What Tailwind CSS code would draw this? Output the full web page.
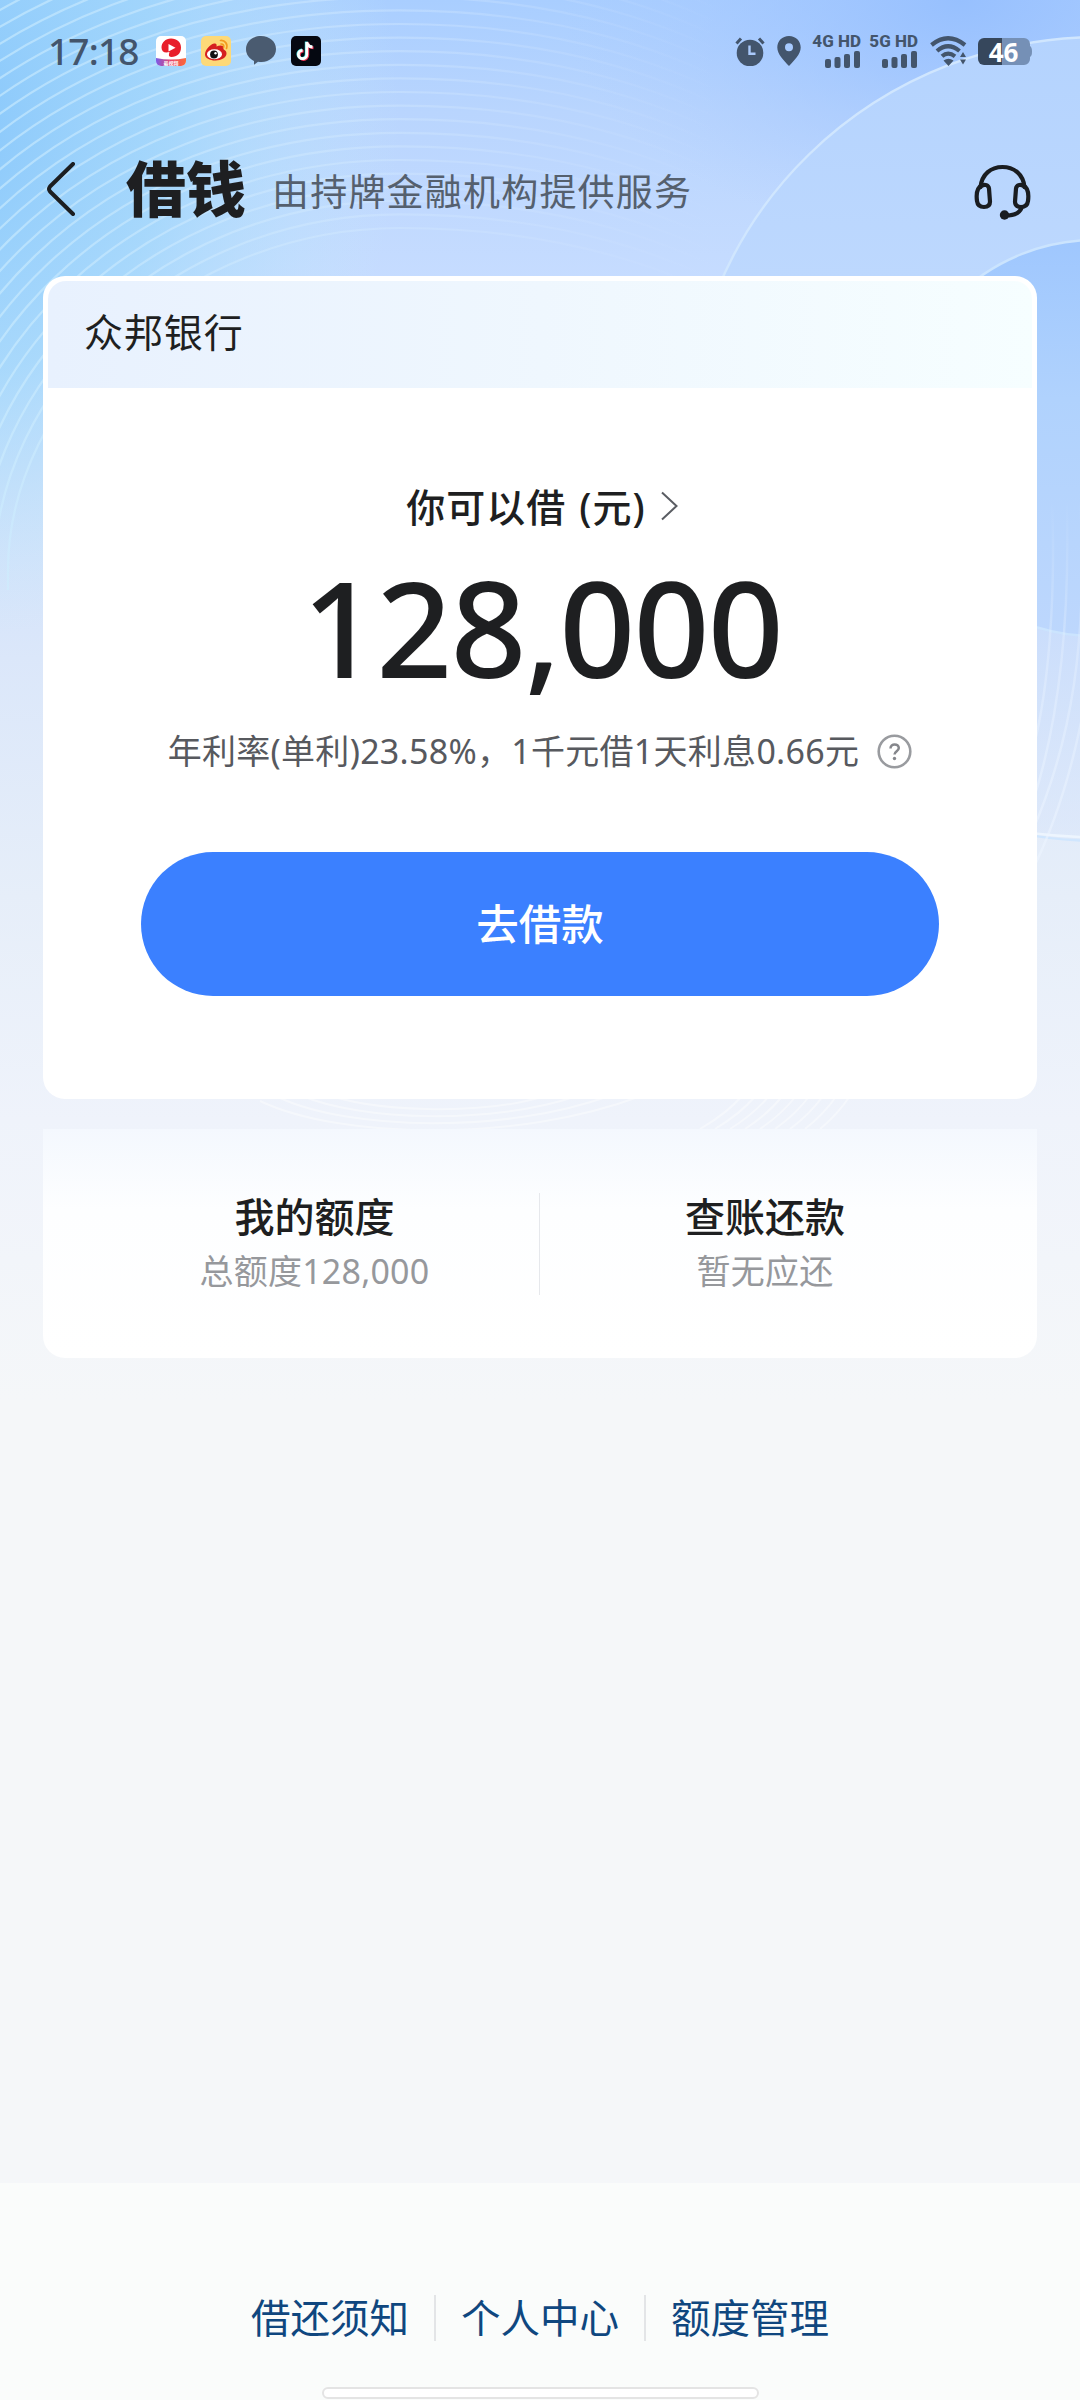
<!DOCTYPE html>
<html lang="zh-CN">
<head>
<meta charset="utf-8">
<meta name="viewport" content="width=device-width">
<title>借钱</title>
<script src="https://cdn.jsdelivr.net/npm/@tailwindcss/browser@4"></script>
</head>
<body class="bg-[#f5f7f9] font-['Noto_Sans','Noto_Sans_CJK_SC',sans-serif] text-[#1e1f21]">
<div class="relative flex h-[2400px] w-[1080px] flex-col overflow-hidden whitespace-nowrap">

  <!-- backdrop -->
  <svg class="absolute top-0 left-0" width="1080" height="1400" viewBox="0 0 1080 1400" fill="none">
    <defs>
      <linearGradient id="base" x1="0" y1="0" x2="0" y2="1">
        <stop offset="0" stop-color="#a9ceff"/><stop offset=".08" stop-color="#b9d5fe"/><stop offset=".2" stop-color="#c6dcff"/>
        <stop offset=".33" stop-color="#cddffb"/><stop offset=".47" stop-color="#dbe7fa"/><stop offset=".64" stop-color="#e6eef9"/><stop offset=".8" stop-color="#eff3fb"/><stop offset="1" stop-color="#f5f7f9"/>
      </linearGradient>
      <radialGradient id="cyan" gradientUnits="userSpaceOnUse" cx="0" cy="0" r="1" gradientTransform="matrix(460 0 0 520 -60 120)">
        <stop offset="0" stop-color="#86c6fb"/><stop offset=".5" stop-color="#9ed7fb" stop-opacity=".75"/><stop offset="1" stop-color="#c6ecfb" stop-opacity="0"/>
      </radialGradient>
      <radialGradient id="blue" gradientUnits="userSpaceOnUse" cx="0" cy="0" r="1" gradientTransform="matrix(400 0 0 240 960 0)">
        <stop offset="0" stop-color="#97c0fe"/><stop offset="1" stop-color="#a9c9ff" stop-opacity="0"/>
      </radialGradient>
      <linearGradient id="disc" x1="0" y1="0" x2="0" y2="1">
        <stop offset="0" stop-color="#b4d3fe"/><stop offset=".3" stop-color="#bdd8fe"/><stop offset=".6" stop-color="#bfd7fd"/><stop offset="1" stop-color="#dbe7fa" stop-opacity=".6"/>
      </linearGradient>
      <linearGradient id="core" x1="0" y1="0" x2="0" y2="1">
        <stop offset="0" stop-color="#9fc7fe"/><stop offset=".4" stop-color="#b0d2fd"/><stop offset="1" stop-color="#bdd7fd"/>
      </linearGradient>
      <linearGradient id="fade" gradientUnits="userSpaceOnUse" x1="0" y1="0" x2="720" y2="0">
        <stop offset="0" stop-color="#cdedfe" stop-opacity=".6"/><stop offset=".5" stop-color="#d2e9fe" stop-opacity=".45"/><stop offset="1" stop-color="#d6e6ff" stop-opacity="0"/>
      </linearGradient>
      <linearGradient id="side" gradientUnits="userSpaceOnUse" x1="0" y1="500" x2="0" y2="880">
        <stop offset="0" stop-color="#e6f1ff" stop-opacity="0"/><stop offset=".4" stop-color="#e6f1ff" stop-opacity=".4"/><stop offset="1" stop-color="#eef5ff" stop-opacity=".6"/>
      </linearGradient>
    </defs>
    <rect width="1080" height="1400" fill="url(#base)"/>
    <rect width="1080" height="1400" fill="url(#cyan)"/>
    <rect width="1080" height="1400" fill="url(#blue)"/>
    <g id="rings" stroke="url(#fade)" stroke-width="2.2"></g>
    <ellipse cx="1100" cy="439" rx="412" ry="402" fill="url(#disc)" stroke="#d0e6fe" stroke-width="2.4"/>
    <circle cx="1095" cy="438" r="198" fill="url(#core)" stroke="#cbe4fe" stroke-width="2.4"/>
    <path d="M1030 833Q1055 836 1080 837" stroke="#edf5fe" stroke-width="2.4"/>
    <g stroke="url(#side)" stroke-width="2.4">
      <path d="M1052 500C1056 600 1048 690 1034 745"/><path d="M1066 480C1071 600 1062 710 1034 798"/><path d="M1080 500C1088 640 1072 740 1032 832"/><path d="M1094 640Q1078 780 1030 875"/>
    </g>
    <g id="waves" stroke="#fff" stroke-opacity=".4" stroke-width="2"></g>
  </svg>

  <!-- status bar -->
  <div class="relative flex h-[102px] shrink-0 items-center justify-between pr-[48px] pl-[48px] text-[#43556c]">
    <div class="flex items-center">
      <span class="w-[108px] pb-[1px] text-[37px] leading-none font-medium tracking-[-0.8px]">17:18</span>
      <svg width="30" height="30" viewBox="0 0 30 30">
        <clipPath id="r"><rect width="30" height="30" rx="5"/></clipPath>
        <linearGradient id="strip"><stop stop-color="#7a5be8"/><stop offset=".5" stop-color="#e8486c"/><stop offset="1" stop-color="#fb6a3a"/></linearGradient>
        <g clip-path="url(#r)"><rect width="30" height="30" fill="#fff"/><path d="M0 22q15 3 30 0v8H0z" fill="url(#strip)"/></g>
        <path d="M15 2.500c6 0 10 3.500 10 9 0 6-4 9.500-9.500 9.500-2 0-3-1-2.500-3l.5-2c-5 1.500-8-.5-8-4.500 0-5 4-9 9.500-9z" fill="#e81e2a"/>
        <path d="M12.500 8l7 3.700-7 3.800z" fill="#fff"/>
        <text x="15" y="28.500" text-anchor="middle" font-size="5" font-weight="700" fill="#fff">最视频</text>
      </svg>
      <svg class="ml-[15px]" width="30" height="30" viewBox="0 0 30 30">
        <rect width="30" height="30" rx="5" fill="#fdd978"/>
        <path d="M4 18.500C4 14 9 8.500 13 7.500c2.500-.5 3 1 2.500 3 3-1.500 7.500-1.500 7 1.500-.2 1 0 1.500 1 2 1.500.8 2 2 2 3.500 0 4-5 7-11 7-6 0-10.500-2.500-10.500-6z" fill="#d5201f"/>
        <ellipse cx="13.500" cy="18.300" rx="7.500" ry="5" fill="#fff"/><circle cx="13" cy="18.500" r="3.900" fill="#111"/><circle cx="14.500" cy="17.300" r="1.200" fill="#fff"/>
        <path d="M19.500 4.500c4.500-.5 7.500 3.500 6 8M20 8c2-.2 3.200 1.500 2.600 3.200" fill="none" stroke="#f39a1e" stroke-width="1.700" stroke-linecap="round"/>
      </svg>
      <svg class="ml-[15px]" width="30" height="30" viewBox="0 0 30 30" fill="#4a5b70"><path d="M15 0c8.500 0 15 5.500 15 13S23.500 26 15.500 26c-1.500 0-2.500-.2-3.500-.3L8 28.700v-3.800C3 22.500 0 18.500 0 13 0 5.500 6.500 0 15 0z"/></svg>
      <svg class="ml-[15px]" width="30" height="30" viewBox="0 0 30 30" fill="none">
        <rect width="30" height="30" rx="5" fill="#050811"/>
        <g stroke-width="2.800"><path d="M15.800 6v12.500a4.200 4.200 0 1 1-4.200-4.200M15.800 6c.4 3 2.500 4.800 5.700 5" stroke="#f2385a" transform="translate(1 .8)"/><path d="M15.800 6v12.500a4.200 4.200 0 1 1-4.200-4.200M15.800 6c.4 3 2.500 4.800 5.700 5" stroke="#3ee0e4" transform="translate(-.6 -.4)"/><path d="M15.800 6v12.500a4.200 4.200 0 1 1-4.200-4.200M15.800 6c.4 3 2.500 4.800 5.700 5" stroke="#fff"/></g>
      </svg>
    </div>
    <div class="flex items-center">
      <svg width="30" height="30" viewBox="0 0 30 30" fill="none"><circle cx="15" cy="17" r="13.300" fill="#43556c"/><path d="M1.500 7.500L6 2.500M28.500 7.500L24 2.500" stroke="#43556c" stroke-width="3"/><path d="M14.500 9.500v8.300h6" stroke="#a9c9fb" stroke-width="2.400"/></svg>
      <svg class="ml-[12px]" width="24" height="30" viewBox="0 0 24 30"><path fill="#43556c" fill-rule="evenodd" d="M12 0c6.800 0 11.700 5 11.700 11.500C23.700 18.500 17 24.500 12 30 7 24.500.3 18.500.3 11.500.3 5 5.200 0 12 0zm0 7.300a4 4 0 1 0 0 8 4 4 0 0 0 0-8z"/></svg>
      <div class="ml-[12px] flex w-[48px] flex-col items-end gap-[3px]">
        <span class="font-[Roboto] text-[17px] leading-[14px] font-extrabold">4G HD</span>
        <svg width="36" height="17" viewBox="0 0 36 17" fill="#43556c"><rect x="0" y="8" width="6" height="9" rx="2"/><rect x="9.500" y="6" width="6" height="11" rx="2"/><rect x="19" y="3" width="6" height="14" rx="2"/><rect x="29" y="0" width="6" height="17" rx="2"/></svg>
      </div>
      <div class="ml-[9px] flex w-[48px] flex-col items-end gap-[3px]">
        <span class="font-[Roboto] text-[17px] leading-[14px] font-extrabold">5G HD</span>
        <svg width="36" height="17" viewBox="0 0 36 17" fill="#43556c"><rect x="0" y="8" width="6" height="9" rx="2"/><rect x="9.500" y="6" width="6" height="11" rx="2"/><rect x="19" y="3" width="6" height="14" rx="2"/><rect x="29" y="0" width="6" height="17" rx="2"/></svg>
      </div>
      <svg class="ml-[12px]" width="38" height="30" viewBox="0 0 38 30" fill="none" stroke="#43556c" stroke-width="4.200"><path d="M1.500 9Q18 -4.500 35 9M7 15Q18 5.500 29.500 15M12 20.300Q18 15 25 20.300"/><path d="M13.500 24.500q5-3.500 10 0L18.500 30zM30 21l3-5 3 5zM30 23.500l3 5 3-5z" fill="#43556c" stroke="none"/></svg>
      <div class="relative ml-[10px] flex h-[27px] w-[54px] items-center justify-center">
        <svg class="absolute inset-0" width="54" height="27" viewBox="0 0 54 27"><path d="M24 0h22a6 6 0 0 1 6 6v2q2 1 2 5.500T52 19v2a6 6 0 0 1-6 6H24z" fill="#7590b6"/><path d="M6 0h18v27H6a6 6 0 0 1-6-6V6a6 6 0 0 1 6-6z" fill="#36475c"/></svg>
        <span class="relative pt-[1px] pr-[3px] text-[26px] leading-none font-bold text-white">46</span>
      </div>
    </div>
  </div>

  <!-- title bar -->
  <header class="relative flex h-[174px] shrink-0 items-center pr-[48px] pl-[45px]">
    <svg width="32" height="54" viewBox="0 0 32 54" fill="none" stroke="#1c1e21" stroke-width="4" stroke-linecap="round" stroke-linejoin="round"><path d="M28 2L5 24.500q-2 2.500 0 5L28 52"/></svg>
    <h1 class="ml-[49px] w-[120px] pb-[1px] text-[60px] leading-none font-black">借钱</h1>
    <p class="ml-[26px] pt-[4px] text-[37px] leading-none tracking-[1.200px] text-[#55606e]">由持牌金融机构提供服务</p>
    <svg class="mt-[5px] ml-auto" width="59" height="58" viewBox="0 0 58 58" fill="none" stroke="#1a1d21" stroke-width="4.200" stroke-linecap="round"><path d="M7 24C8.500 11 17.500 4 29 4s20.500 7 22 20"/><path d="M8.500 22.500c3-1.500 6.500-.5 7 3l1 13c0 4.500-2.500 5.500-6 5.500-4 0-6.500-2-7-6-.8-6-.8-13 5-15.500zM49.500 22.500c-3-1.500-6.500-.5-7 3l-1 13c0 4.500 2.500 5.500 6 5.500 4 0 6.500-2 7-6 .8-6 .8-13-5-15.500z"/><path d="M48 45c-2 5-8 7.500-16 7.500"/><circle cx="31" cy="52" r="4.700" fill="#1a1d21" stroke="none"/></svg>
  </header>

  <!-- loan card -->
  <section class="relative mx-[43px] flex h-[823px] shrink-0 flex-col items-center rounded-[22px] bg-white p-[5px]">
    <div class="flex h-[107px] w-full shrink-0 items-center rounded-t-[18px] bg-linear-to-r from-[#e8f1fe] via-[#eff7fe] to-[#f6feff] pb-[4px] pl-[36px] text-[39px] tracking-[0.900px]">众邦银行</div>
    <div class="mt-[92px] flex h-[52px] items-center pl-[4px] text-[39px] leading-none font-medium">
      <span class="tracking-[1px]">你可以借<span class="ml-[13px]">(元)</span></span>
      <svg class="ml-[15px]" width="17" height="30" viewBox="0 0 17 30" fill="none" stroke="#5a5d63" stroke-width="2"><path d="M1 1.500L15.500 15 1 28.500"/></svg>
    </div>
    <div class="mt-[30px] flex h-[128px] items-center pl-[4px] text-[133px] leading-none font-medium tracking-[-1.800px]">128,000</div>
    <div class="mt-[38px] flex h-[46px] items-center text-[34px] leading-none text-[#57595e]">
      <span class="tracking-[0.280px]">年利率(单利)23.58%，1千元借1天利息0.66元</span>
      <svg class="ml-[18px]" width="35" height="35" viewBox="0 0 35 35" fill="none"><circle cx="17.500" cy="17.500" r="15.800" stroke="#999b9f" stroke-width="2.600"/><path d="M13.500 14.500c0-5.500 8.300-5.300 8.300-.4 0 3.200-4.300 3.100-4.300 6.400" stroke="#85878c" stroke-width="2.500"/><circle cx="17.500" cy="24.500" r="1.700" fill="#85878c"/></svg>
    </div>
    <button class="mt-[78px] h-[144px] w-[798px] rounded-full bg-[#3b80ff] text-[42.500px] font-medium text-white">去借款</button>
  </section>

  <!-- account shortcuts -->
  <section class="relative mx-[43px] mt-[30px] flex h-[229px] shrink-0 rounded-b-[22px] bg-linear-to-b from-[#f4f8fe] via-[#fdfeff] via-35% to-white pt-[64px]">
    <div class="flex w-[496px] flex-col items-center pl-[47px]">
      <span class="text-[40px] leading-[48px] font-medium">我的额度</span>
      <span class="mt-[8px] text-[34px] leading-[44px] tracking-[0.200px] text-[#96989c]">总额度128,000</span>
    </div>
    <div class="h-[102px] w-px bg-[#e6e8ec]"></div>
    <div class="flex flex-1 flex-col items-center pr-[47px]">
      <span class="text-[40px] leading-[48px] font-medium">查账还款</span>
      <span class="mt-[8px] text-[34px] leading-[44px] tracking-[0.200px] text-[#96989c]">暂无应还</span>
    </div>
  </section>

  <!-- footer -->
  <footer class="relative mt-auto flex h-[217px] shrink-0 flex-col items-center bg-[#fafcfb] pt-[112px] text-[39.500px] leading-[46px] text-[#0f477f]">
    <nav class="flex h-[46px] items-center">
      <span>借还须知</span>
      <i class="mx-[25px] h-[46px] w-[2px] bg-[#e3e5e7]"></i>
      <span>个人中心</span>
      <i class="mx-[25px] h-[46px] w-[2px] bg-[#e3e5e7]"></i>
      <span>额度管理</span>
    </nav>
    <div class="mt-auto mb-[1px] h-[12px] w-[437px] rounded-full border-2 border-[#e4e4e4] bg-white"></div>
  </footer>
</div>
<script>
  const draw = (id, list) => {
    const g = document.getElementById(id);
    for (const d of list) {
      const p = document.createElementNS('http://www.w3.org/2000/svg', 'path');
      p.setAttribute('d', d);
      g.appendChild(p);
    }
  };
  const rings = [];
  for (let i = 0; i < 25; i++) {
    const k = i * 13.6, x = 8 - k, y = 228 - k;
    rings.push(`M${x} 590V570C${x} ${400 - k * .6} ${180 - k * .8} ${y} 400 ${y}C560 ${y} 680 ${y + 40} 780 ${y + 100}`);
  }
  draw('rings', rings);
  const waves = [];
  for (let i = 0; i < 4; i++) {
    waves.push(`M${320 - i * 20} ${1092 + i * 3}C${370 - i * 10} ${1112 + i * 9} ${480 + i * 12} ${1116 + i * 9} ${545 + i * 32} 1096`);
  }
  for (let i = 0; i < 9; i++) {
    waves.push(`M${700 + i * 15} 1129Q${726 + i * 14} ${1114} ${742 + i * 13.5} 1096`);
  }
  draw('waves', waves);
</script>
</body>
</html>
